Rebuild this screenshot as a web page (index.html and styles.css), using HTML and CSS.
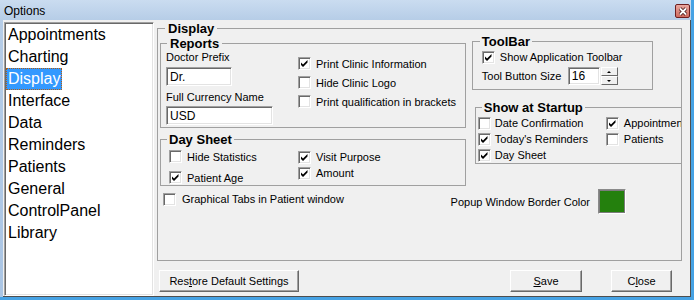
FILE: index.html
```html
<!DOCTYPE html>
<html lang="en">
<head>
  <meta charset="UTF-8" />
  <title>Options</title>
  <link rel="stylesheet" href="styles.css">
</head>
<body>
<svg class="defs" width="0" height="0" aria-hidden="true">
  <defs>
    <symbol id="tick" viewBox="0 0 9 9">
      <polygon points="1,3.5 3,5.5 7.5,1 7.5,3.5 3,8 1,6" />
    </symbol>
  </defs>
</svg>
<div class="window">
  <div class="titlebar">
    <span class="title">Options</span>
    <span class="close-btn">
      <svg width="10" height="9" viewBox="0 0 10 9"><path d="M2 1.5 L8 7.5 M8 1.5 L2 7.5" stroke="#3a1010" stroke-width="3.4" /><path d="M2 1.5 L8 7.5 M8 1.5 L2 7.5" stroke="#fff" stroke-width="1.8" /></svg>
    </span>
  </div>
  <div class="client">
    <!-- Category list -->
    <div class="list">
      <div class="item">Appointments</div>
      <div class="item">Charting</div>
      <div class="item"><span class="selected">Display</span></div>
      <div class="item">Interface</div>
      <div class="item">Data</div>
      <div class="item">Reminders</div>
      <div class="item">Patients</div>
      <div class="item">General</div>
      <div class="item">ControlPanel</div>
      <div class="item">Library</div>
    </div>
    <!-- Display page -->
    <div class="pane">
      <fieldset class="group display">
        <legend>Display</legend>
        <div class="top-row">
          <div class="left-col">
            <fieldset class="group reports">
              <legend>Reports</legend>
              <div class="reports-body">
                <div class="fields">
                  <div class="label">Doctor Prefix</div>
                  <div class="textbox prefix">Dr.</div>
                  <div class="label currency-label">Full Currency Name</div>
                  <div class="textbox currency">USD</div>
                </div>
                <div class="checks">
                  <div class="check"><span class="cb on"><svg><use href="#tick"/></svg></span>Print Clinic Information</div>
                  <div class="check"><span class="cb"></span>Hide Clinic Logo</div>
                  <div class="check"><span class="cb"></span>Print qualification in brackets</div>
                </div>
              </div>
            </fieldset>
            <fieldset class="group daysheet">
              <legend>Day Sheet</legend>
              <div class="daysheet-body">
                <div class="ds-left">
                  <div class="check"><span class="cb"></span>Hide Statistics</div>
                  <div class="check"><span class="cb on"><svg><use href="#tick"/></svg></span>Patient Age</div>
                </div>
                <div class="ds-right">
                  <div class="check"><span class="cb on"><svg><use href="#tick"/></svg></span>Visit Purpose</div>
                  <div class="check"><span class="cb on"><svg><use href="#tick"/></svg></span>Amount</div>
                </div>
              </div>
            </fieldset>
          </div>
          <div class="right-col">
            <fieldset class="group toolbar">
              <legend>ToolBar</legend>
              <div class="toolbar-body">
                <div class="check"><span class="cb on"><svg><use href="#tick"/></svg></span>Show Application Toolbar</div>
                <div class="spin-row">
                  <span class="spin-label">Tool Button Size</span>
                  <div class="textbox spin-box">16</div>
                  <div class="spin-btns">
                    <span class="spin-btn"><i class="up"></i></span>
                    <span class="spin-btn"><i class="down"></i></span>
                  </div>
                </div>
              </div>
            </fieldset>
            <fieldset class="group startup">
              <legend>Show at Startup</legend>
              <div class="startup-body">
                <div class="st-left">
                  <div class="check"><span class="cb"></span>Date Confirmation</div>
                  <div class="check"><span class="cb on"><svg><use href="#tick"/></svg></span>Today's Reminders</div>
                  <div class="check"><span class="cb on"><svg><use href="#tick"/></svg></span>Day Sheet</div>
                </div>
                <div class="st-right">
                  <div class="check"><span class="cb on"><svg><use href="#tick"/></svg></span>Appointment</div>
                  <div class="check"><span class="cb"></span>Patients</div>
                </div>
              </div>
            </fieldset>
          </div>
        </div>
        <div class="bottom-row">
          <div class="check graphical"><span class="cb"></span>Graphical Tabs in Patient window</div>
          <div class="popup">
            <span>Popup Window Border Color</span>
            <span class="swatch"></span>
          </div>
        </div>
      </fieldset>
      <div class="buttons">
        <button class="btn restore">Res<u>t</u>ore Default Settings</button>
        <button class="btn save"><u>S</u>ave</button>
        <button class="btn close">C<u>l</u>ose</button>
      </div>
    </div>
  </div>
</div>
</body>
</html>
```

FILE: styles.css
```css
body {
  margin: 0;
  font-family: "Liberation Sans", Arial, sans-serif;
  font-size: 11px;
  color: #000;
}
.defs {
  position: absolute;
}
.window {
  width: 694px;
  height: 300px;
  box-sizing: border-box;
  border-right: 3px solid #46a2e4;
  border-bottom: 3px solid #46a2e4;
  background: linear-gradient(#cadcf0, #b6cde7 20px, #aac5e4);
  display: flex;
  flex-direction: column;
  overflow: hidden;
}
.titlebar {
  height: 20px;
  display: flex;
  align-items: center;
  padding-left: 4px;
}
.title {
  font-size: 12px;
  flex: 1;
  padding-top: 1px;
}
.close-btn {
  width: 13px;
  height: 12px;
  margin-right: 1px;
  margin-top: 2px;
  border: 1px solid #6e1f1f;
  border-radius: 2px;
  background: linear-gradient(#eaa8a0, #cf6a5e);
  display: flex;
  align-items: center;
  justify-content: center;
}
.client {
  flex: 1;
  margin-left: 3px;
  background: #f0f0f0;
  border-right: 1px solid #4e4e4e;
  border-bottom: 1px solid #4e4e4e;
  display: flex;
  align-items: flex-start;
  min-height: 0;
}
/* category list */
.list {
  width: 150px;
  height: 274px;
  margin: 2px 0 0 1px;
  box-sizing: border-box;
  background: #fff;
  border: 1px solid;
  border-color: #a0a0a0 #fff #fff #a0a0a0;
  box-shadow: inset 1px 1px 0 #696969, inset -1px -1px 0 #e3e3e3;
  padding: 1px 1px;
}
.item {
  font-size: 16px;
  line-height: 22px;
  height: 22px;
  padding-left: 2px;
}
.selected {
  display: inline-block;
  height: 20px;
  line-height: 20px;
  margin-left: -2px;
  padding: 0 1px;
  background: #3399ff;
  color: #fff;
  border: 1px dotted #b35d10;
}
/* right pane */
.pane {
  margin: 1px 0 0 3px;
}
.group {
  margin: 0;
  padding: 0;
  border: 1px solid #a0a0a0;
  box-sizing: border-box;
  min-width: 0;
}
.group legend {
  font-weight: bold;
  font-size: 13px;
  line-height: 15px;
  padding: 0 2px;
}
.display {
  width: 525px;
  height: 240px;
}
.display > legend {
  margin-left: 7px;
  padding: 0 3px;
}
.top-row {
  display: flex;
  height: 150px;
}
.left-col {
  width: 307px;
  margin-left: 2px;
}
.right-col {
  width: 210px;
  margin: -2px 0 0 6px;
  overflow: hidden;
}
.check {
  display: flex;
  align-items: center;
  height: 19px;
  white-space: nowrap;
}
.cb {
  width: 13px;
  height: 13px;
  box-sizing: border-box;
  flex: none;
  background: #fff;
  border: 1px solid;
  border-color: #a0a0a0 #fff #fff #a0a0a0;
  box-shadow: inset 1px 1px 0 #696969, inset -1px -1px 0 #e3e3e3;
  margin-right: 5px;
  padding: 1px;
}
.cb svg {
  display: block;
  width: 9px;
  height: 9px;
  fill: #000;
}
.textbox {
  box-sizing: border-box;
  background: #fff;
  border: 1px solid;
  border-color: #a0a0a0 #fff #fff #a0a0a0;
  box-shadow: inset 1px 1px 0 #696969, inset -1px -1px 0 #e3e3e3;
  padding: 0 3px;
  display: flex;
  align-items: center;
  font-size: 12px;
}
/* reports */
.reports {
  height: 92px;
}
.reports > legend {
  margin-left: 6px;
  padding: 0 3px;
}
.reports-body {
  display: flex;
  padding-left: 5px;
}
.fields {
  width: 132px;
}
.label {
  line-height: 13px;
}
.prefix {
  width: 66px;
  height: 19px;
  margin-top: 3px;
}
.currency-label {
  margin-top: 5px;
}
.currency {
  width: 107px;
  height: 19px;
  margin-top: 2px;
}
.checks {
  margin-top: 3px;
}
/* day sheet */
.daysheet {
  height: 54px;
  margin-top: 4px;
}
.daysheet > legend {
  margin-left: 6px;
}
.daysheet-body {
  display: flex;
  padding-left: 8px;
}
.ds-left {
  width: 129px;
}
.ds-left .check + .check {
  margin-top: 2px;
}
.ds-right {
  margin-top: 2px;
}
.ds-right .check {
  height: 16px;
}
/* toolbar */
.toolbar {
  width: 181px;
  height: 56px;
}
.toolbar > legend {
  margin-left: 7px;
}
.toolbar-body {
  padding-left: 9px;
}
.toolbar-body .check {
  height: 16px;
}
.spin-row {
  display: flex;
  align-items: center;
  margin-top: 2px;
}
.spin-label {
  width: 86px;
}
.spin-box {
  width: 32px;
  height: 18px;
}
.spin-btns {
  margin-left: 1px;
  display: flex;
  flex-direction: column;
}
.spin-btn {
  width: 17px;
  height: 9px;
  box-sizing: border-box;
  background: #f0f0f0;
  border: 1px solid;
  border-color: #fff #696969 #696969 #fff;
  display: flex;
  align-items: center;
  justify-content: center;
}
.spin-btn i {
  width: 0;
  height: 0;
  border-left: 2px solid transparent;
  border-right: 2px solid transparent;
}
.spin-btn .up {
  border-bottom: 2px solid #000;
}
.spin-btn .down {
  border-top: 2px solid #000;
}
/* show at startup */
.startup {
  width: 240px;
  height: 64px;
  margin: 10px 0 0 3px;
}
.startup > legend {
  margin-left: 6px;
}
.startup-body {
  display: flex;
  padding-left: 2px;
}
.startup-body .check {
  height: 16px;
}
.st-left {
  width: 128px;
}
.st-left .cb {
  margin-right: 4px;
}
/* bottom row */
.bottom-row {
  display: flex;
  align-items: flex-start;
  margin-top: 3px;
}
.graphical {
  margin: 2px 0 0 5px;
  height: 16px;
}
.graphical .cb {
  margin-right: 6px;
}
.popup {
  margin-left: auto;
  margin-right: 55px;
  display: flex;
  align-items: center;
}
.swatch {
  width: 28px;
  height: 25px;
  box-sizing: border-box;
  margin-left: 8px;
  background: #24800d;
  border: 1px solid;
  border-color: #8a8a8a #fff #fff #8a8a8a;
  box-shadow: inset 0 0 0 1px #7c7c7c;
}
/* dialog buttons */
.buttons {
  display: flex;
  margin-top: 9px;
  padding-left: 2px;
}
.btn {
  height: 22px;
  box-sizing: border-box;
  font-family: "Liberation Sans", Arial, sans-serif;
  font-size: 11px;
  color: #000;
  background: #f0f0f0;
  border: 1px solid;
  border-color: #fff #696969 #696969 #fff;
  box-shadow: inset -1px -1px 0 #a0a0a0;
  padding: 0;
}
.restore {
  width: 140px;
}
.save {
  width: 72px;
  margin-left: 211px;
}
.close {
  width: 61px;
  margin-left: 29px;
}
```
